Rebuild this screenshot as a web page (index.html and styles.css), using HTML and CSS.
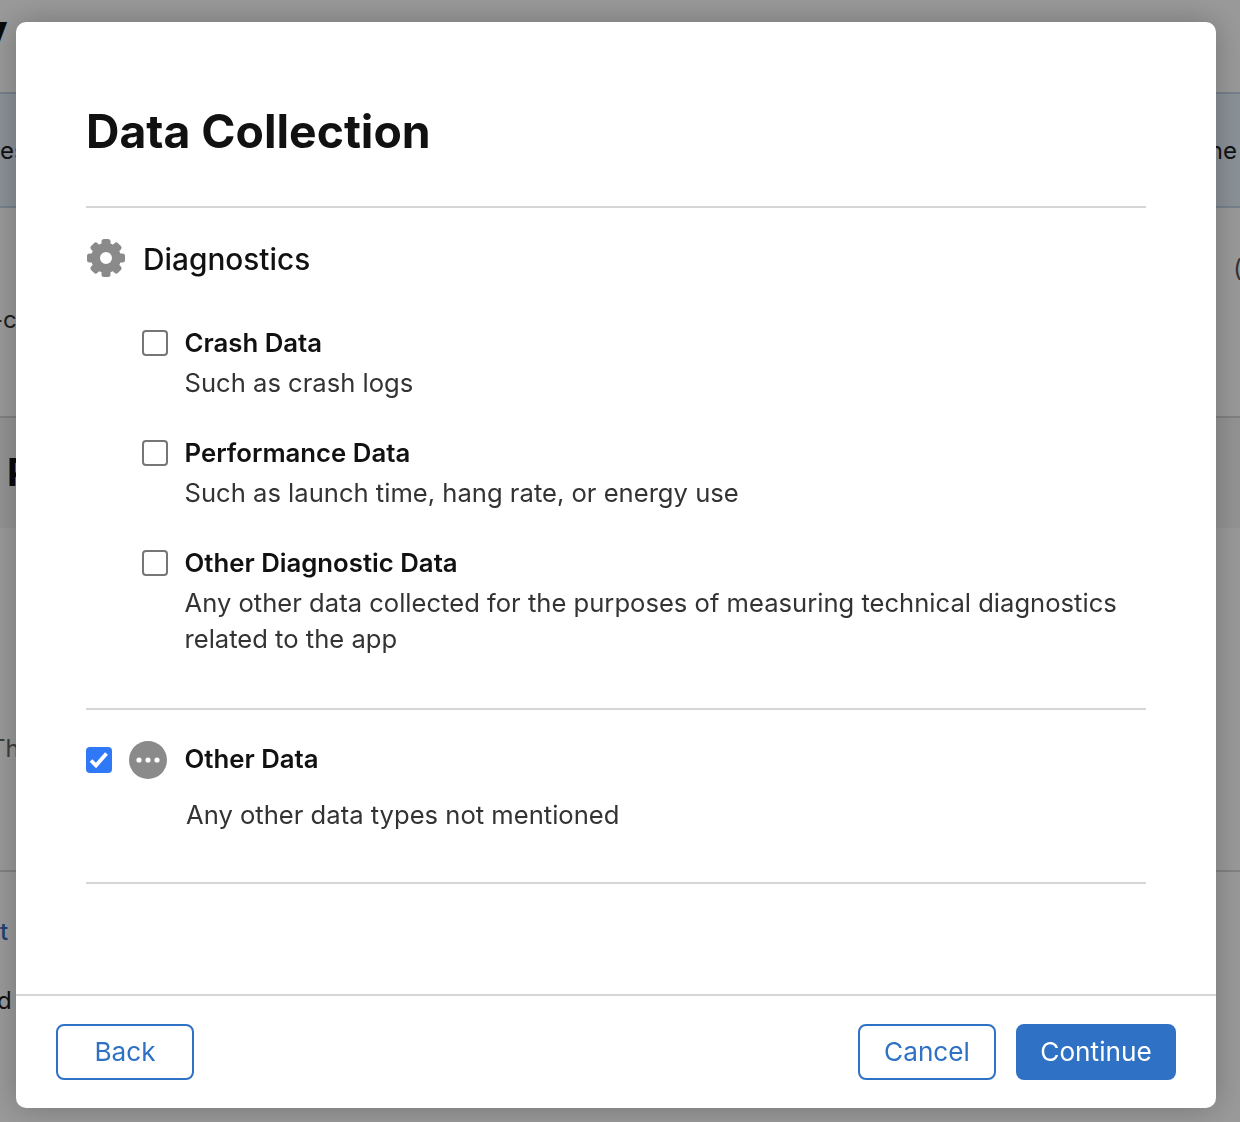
FILE: index.html
```html
<!DOCTYPE html>
<html lang="en">
<head>
<meta charset="utf-8">
<title>Data Collection</title>
<link rel="stylesheet" href="styles.css">
</head>
<body>
<div class="page">
  <header class="page-head"><span class="page-title">v</span></header>
  <section class="band"><span>es</span><span>the</span></section>
  <section class="intro"><span>-c</span><span class="paren">(</span></section>
  <section class="sub-head"><span class="sub-title">P</span></section>
  <section class="details"><span>Th</span></section>
  <section class="links"><span class="link">t</span><span>d</span></section>
</div>
<div class="overlay">
  <div class="modal" role="dialog" aria-labelledby="modal-title">
    <div class="modal-body">
      <h1 class="title" id="modal-title">Data Collection</h1>
      <section class="group group-diagnostics">
        <div class="group-head">
          <svg class="icon icon-gear" viewBox="-19 -19 38 38" aria-hidden="true">
            <g fill="#8a8a8a">
              <rect x="-4.5" y="-19" width="9" height="9" rx="2.5"/>
              <rect x="-4.5" y="-19" width="9" height="9" rx="2.5" transform="rotate(45)"/>
              <rect x="-4.5" y="-19" width="9" height="9" rx="2.5" transform="rotate(90)"/>
              <rect x="-4.5" y="-19" width="9" height="9" rx="2.5" transform="rotate(135)"/>
              <rect x="-4.5" y="-19" width="9" height="9" rx="2.5" transform="rotate(180)"/>
              <rect x="-4.5" y="-19" width="9" height="9" rx="2.5" transform="rotate(225)"/>
              <rect x="-4.5" y="-19" width="9" height="9" rx="2.5" transform="rotate(270)"/>
              <rect x="-4.5" y="-19" width="9" height="9" rx="2.5" transform="rotate(315)"/>
            </g>
            <circle r="10.5" fill="none" stroke="#8a8a8a" stroke-width="9"/>
          </svg>
          <h2 class="group-title">Diagnostics</h2>
        </div>
        <div class="options">
          <div class="option">
            <span class="check"></span>
            <div class="option-text">
              <div class="option-name">Crash Data</div>
              <div class="option-desc">Such as crash logs</div>
            </div>
          </div>
          <div class="option">
            <span class="check"></span>
            <div class="option-text">
              <div class="option-name">Performance Data</div>
              <div class="option-desc">Such as launch time, hang rate, or energy use</div>
            </div>
          </div>
          <div class="option">
            <span class="check"></span>
            <div class="option-text">
              <div class="option-name">Other Diagnostic Data</div>
              <div class="option-desc">Any other data collected for the purposes of measuring technical diagnostics related to the app</div>
            </div>
          </div>
        </div>
      </section>
      <section class="group group-other">
        <div class="other-head">
          <span class="check check-on">
            <svg viewBox="0 0 26 26" aria-hidden="true"><path d="M5 13.5l5 5 10.5-12" fill="none" stroke="#fff" stroke-width="3.8"/></svg>
          </span>
          <svg class="icon" viewBox="0 0 38 38" aria-hidden="true">
            <circle cx="19" cy="19" r="19" fill="#8a8a8a"/>
            <circle cx="10" cy="19" r="2.6" fill="#fff"/>
            <circle cx="19" cy="19" r="2.6" fill="#fff"/>
            <circle cx="28" cy="19" r="2.6" fill="#fff"/>
          </svg>
          <div class="option-name other-name">Other Data</div>
        </div>
        <div class="other-desc">Any other data types not mentioned</div>
      </section>
    </div>
    <footer class="modal-foot">
      <button class="btn" type="button">Back</button>
      <div class="foot-right">
        <button class="btn" type="button">Cancel</button>
        <button class="btn btn-primary" type="button">Continue</button>
      </div>
    </footer>
  </div>
</div>
</body>
</html>
```

FILE: styles.css
```css
* { box-sizing: border-box; }
html, body { margin: 0; height: 100%; overflow: hidden; }
body { background: #fff; font-family: Inter, "Liberation Sans", sans-serif; color: #1d1d1f; font-size: 24px; }

/* page behind the dialog */
.page { height: 1122px; display: flex; flex-direction: column; }
.page-head { height: 92px; font-size: 48px; font-weight: 700; line-height: 1; padding-top: 7px; margin-left: -21px; color: #111; }
.band { height: 116px; background: #e6f1fb; border-top: 2px solid #c3d6e8; border-bottom: 2px solid #c3d6e8; display: flex; justify-content: space-between; align-items: center; padding-right: 3px; }
.intro { height: 210px; border-bottom: 2px solid #d6d6d6; display: flex; justify-content: space-between; padding-top: 46px; color: #333; }
.intro span:first-child { margin-top: 51px; margin-left: -8px; }
.paren { margin-right: -2px; color: #555; }
.sub-head { height: 110px; background: #f5f5f5; padding-top: 31px; }
.sub-title { font-size: 38px; font-weight: 700; color: #111; margin-left: 7px; }
.details { height: 342px; padding-top: 206px; color: #666; }
.details span { margin-left: -10px; display: block; }
.links { flex: 1; border-top: 2px solid #d6d6d6; padding-top: 45px; display: flex; flex-direction: column; gap: 40px; align-items: flex-start; }
.links .link { color: #2f6fc4; font-weight: 500; }
.links span:last-child { margin-left: -3px; }

/* dialog */
.overlay { position: fixed; inset: 0; background: rgba(0,0,0,.4); padding: 22px 24px 14px 16px; display: flex; }
.modal { flex: 1; background: #fff; border-radius: 10px; display: flex; flex-direction: column; box-shadow: 0 0 30px rgba(0,0,0,.25); }
.modal-body { flex: 1; padding: 0 70px; }
.title { margin: 0; height: 186px; padding-top: 79px; font-size: 46.3px; line-height: 60px; font-weight: 700; color: #111; border-bottom: 2px solid #d6d6d6; }
.group-diagnostics { height: 502px; border-bottom: 2px solid #d6d6d6; padding-top: 30px; }
.group-head { display: flex; align-items: center; gap: 18px; height: 44px; }
.icon { width: 38px; height: 38px; flex: none; display: block; }
.icon-gear { margin: -4px 0 0 1px; }
.group-title { margin: 0 0 2px; font-size: 29.8px; line-height: 44px; font-weight: 550; color: #111; }
.options { display: flex; flex-direction: column; gap: 36px; padding: 45px 0 0 56px; }
.option { display: flex; gap: 16px; align-items: flex-start; }
.option-text { padding-left: 0.5px; }
.check { width: 26px; height: 26px; border: 2px solid #767676; border-radius: 4px; flex: none; margin-top: 3px; display: block; }
.check-on { background: #2f78f7; border: 0; margin: 0; }
.check-on svg { display: block; width: 26px; height: 26px; }
.option-name { font-size: 25.75px; line-height: 32px; font-weight: 600; color: #111; }
.option-desc { font-size: 25.6px; line-height: 36px; margin-top: 6px; color: #333; }
.group-other { height: 174px; border-bottom: 2px solid #d6d6d6; padding-top: 30px; }
.other-head { display: flex; align-items: center; gap: 17px; height: 40px; }
.other-name { margin-bottom: 2px; padding-left: 0.5px; }
.other-desc { font-size: 25.6px; line-height: 36px; margin: 17px 0 0 100px; color: #333; }
.modal-foot { height: 114px; border-top: 2px solid #d6d6d6; padding: 28px 40px; display: flex; justify-content: space-between; }
.foot-right { display: flex; gap: 20px; }
.btn { width: 138px; height: 56px; border: 2px solid #2f71c5; border-radius: 8px; background: #fff; color: #2f71c5; font: 400 26.2px Inter, "Liberation Sans", sans-serif; padding: 0 0 2px; }
.btn-primary { width: 160px; background: #2f71c5; color: #fff; }
```
